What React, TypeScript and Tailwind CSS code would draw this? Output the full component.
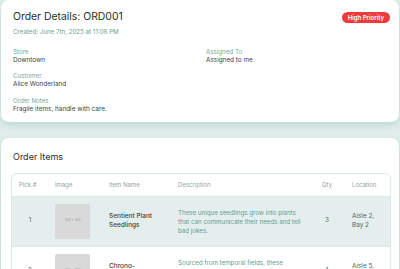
import React from "react";

const details = [
  { label: "Store", value: "Downtown" },
  { label: "Assigned To", value: "Assigned to me" },
  { label: "Customer", value: "Alice Wonderland" },
  null,
  { label: "Order Notes", value: "Fragile items, handle with care." },
];

const items = [
  {
    pick: 1,
    name: "Sentient Plant Seedlings",
    desc: "These unique seedlings grow into plants that can communicate their needs and tell bad jokes.",
    qty: 3,
    location: "Aisle 2, Bay 2",
  },
  {
    pick: 2,
    name: "Chrono-Synclastic Lens",
    desc: "Sourced from temporal fields, these devices bend time in small, mostly harmless loops.",
    qty: 1,
    location: "Aisle 5, Bay 1",
  },
];

export default function App() {
  return (
    <div
      className="min-h-screen bg-[#e0edea] px-px text-[#2f3a37]"
      style={{ fontFamily: "Inter, 'Noto Sans', sans-serif" }}
    >
      <section className="rounded-lg bg-white pl-[12px] pr-[9px] pt-[10px] pb-[8px] shadow-[0_3px_6px_rgba(150,190,180,0.45)]">
        <div className="flex items-start justify-between">
          <div>
            <h1 className="text-[10.4px] leading-[14px] text-[#27302e]">Order Details: ORD001</h1>
            <p className="mt-[3px] text-[6.2px] leading-[10px] text-[#6aa293]">
              Created: June 7th, 2025 at 11:08 PM
            </p>
          </div>
          <span className="mt-[2px] rounded-full bg-[#ef3b3b] px-[6px] text-[6px] leading-[11px] font-semibold text-white">
            High Priority
          </span>
        </div>
        <div className="mt-[9.5px] grid grid-cols-2 gap-x-[12px] gap-y-[6px] pr-[3px]">
          {details.map((d, i) =>
            d ? (
              <div key={i}>
                <div className="text-[6.2px] leading-[9px] text-[#7aa69b]">{d.label}</div>
                <div className="text-[6.4px] leading-[9.5px] text-[#3e4543]">{d.value}</div>
              </div>
            ) : (
              <div key={i} />
            )
          )}
        </div>
      </section>

      <section className="mt-[16px] rounded-lg bg-white pl-[10px] pr-[8px] pt-[13px] pb-[10px] shadow-[0_3px_6px_rgba(150,190,180,0.45)]">
        <h2 className="pl-[2px] text-[9px] leading-[12px] text-[#27302e]">Order Items</h2>
        <div className="mt-[10px] overflow-hidden rounded-md border border-[#dbe9e5]">
          <table className="w-full table-fixed border-collapse text-left">
            <colgroup>
              <col className="w-[36px]" />
              <col className="w-[54px]" />
              <col className="w-[69px]" />
              <col className="w-[143px]" />
              <col className="w-[31px]" />
              <col />
            </colgroup>
            <thead>
              <tr className="h-[22px] border-b border-[#dbe9e5] text-[6px] text-[#95a29f]">
                <th className="pl-[7px] font-normal">Pick #</th>
                <th className="pl-[7px] font-normal">Image</th>
                <th className="pl-[7px] font-normal">Item Name</th>
                <th className="pl-[7px] font-normal">Description</th>
                <th className="pr-[5px] text-center font-normal">Qty</th>
                <th className="pl-[7px] font-normal">Location</th>
              </tr>
            </thead>
            <tbody>
              {items.map((it, i) => (
                <tr
                  key={it.pick}
                  className={`border-b border-[#dbe9e5] ${i === 0 ? "bg-[#e4efed]" : "bg-white"}`}
                >
                  <td className="text-center text-[6.4px] text-[#58625f]">{it.pick}</td>
                  <td className="py-[7px] pl-[7px]">
                    <div className="flex h-[35px] w-[35px] items-center justify-center rounded-[2px] bg-[#d9d9d9] text-[3.5px] text-[#a0a0a0]">
                      100 × 100
                    </div>
                  </td>
                  <td className="pl-[7px] pr-[6px] text-[6.5px] leading-[9px] font-medium text-[#3a4341]">
                    {it.name}
                  </td>
                  <td className="pl-[7px] pr-[8px] text-[6.2px] leading-[9px] text-[#5f9c8d]">{it.desc}</td>
                  <td className="pr-[5px] text-center text-[6.4px] text-[#58625f]">{it.qty}</td>
                  <td className="pl-[7px] pr-[8px] text-[6.4px] leading-[9px] text-[#58625f]">
                    {it.location}
                  </td>
                </tr>
              ))}
            </tbody>
          </table>
        </div>
      </section>
    </div>
  );
}
